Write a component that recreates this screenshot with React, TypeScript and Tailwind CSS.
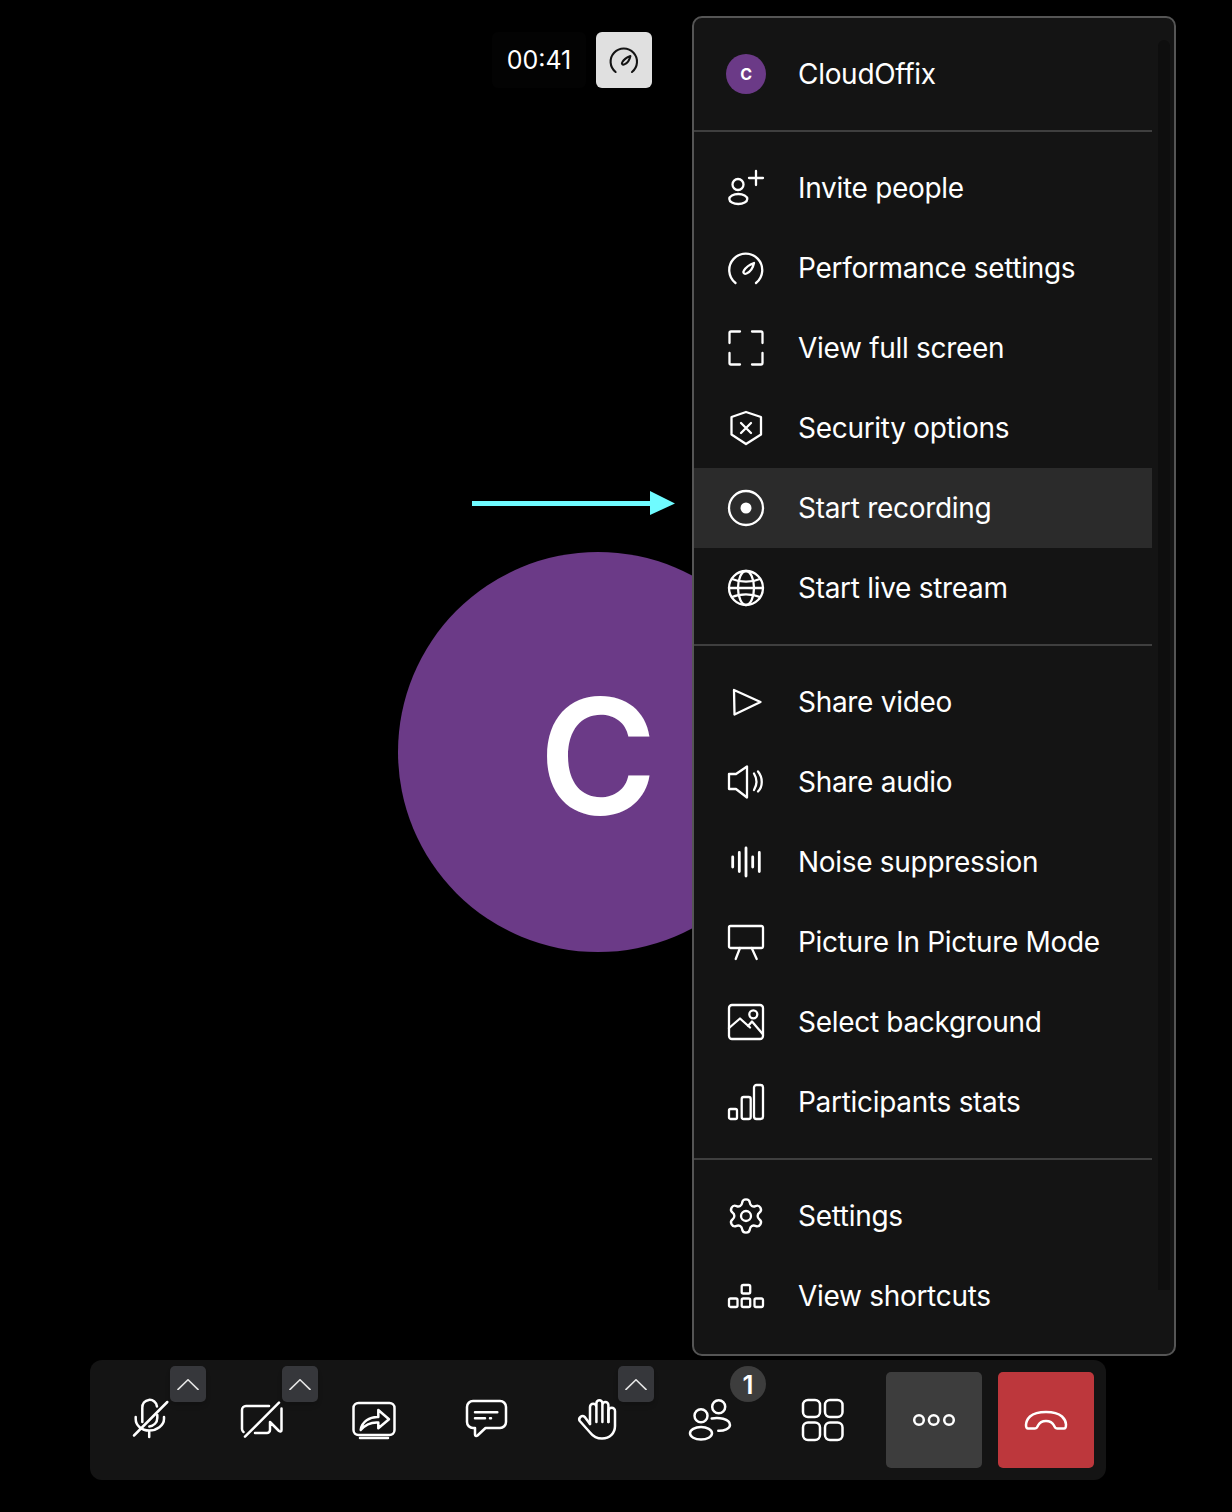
import type { ReactNode } from 'react';
import { Settings } from 'lucide-react';

function Ico({ children, className = 'w-10 h-10', sw = 2.300 }: { children: ReactNode; className?: string; sw?: number }) {
  return (
    <svg
      viewBox="0 0 40 40"
      fill="none"
      stroke="currentColor"
      strokeWidth={sw}
      strokeLinecap="round"
      strokeLinejoin="round"
      className={`${className} overflow-visible shrink-0`}
    >
      {children}
    </svg>
  );
}

const gauge = (
  <>
    <path d="M9.500 35A16.500 16.500 0 1 1 30 35" />
    <path d="M28 15c-1 5-4 9-7.500 10.500-2.500 1-4-1-2.500-3C20 19 24 16.500 28 15Z" />
  </>
);

const icons = {
  invite: (
    <>
      <circle cx="12" cy="16.500" r="5.500" />
      <ellipse cx="12.300" cy="31" rx="9" ry="5" />
      <path d="M30 3v14M23 10h14" />
    </>
  ),
  gauge,
  full: (
    <path d="M3.500 15V5a1.500 1.500 0 0 1 1.500-1.500h9M26 3.500h9a1.500 1.500 0 0 1 1.500 1.500v10M3.500 25v10a1.500 1.500 0 0 0 1.500 1.500h9M26 36.500h9a1.500 1.500 0 0 0 1.500-1.500V25" />
  ),
  shield: (
    <>
      <path d="M20 4l15 5v17.500L20 36 5.500 26.500V9Z" />
      <path d="M15 15l10 10M25 15L15 25" />
    </>
  ),
  record: (
    <>
      <circle cx="20" cy="20" r="17" />
      <circle cx="20" cy="20" r="5.500" fill="currentColor" stroke="none" />
    </>
  ),
  globe: (
    <>
      <circle cx="20" cy="20" r="17" />
      <ellipse cx="20" cy="20" rx="8" ry="17" />
      <path d="M3 20h34M6 11c8 3.500 20 3.500 28 0M6 29c8-3.500 20-3.500 28 0" />
    </>
  ),
  play: <path d="M8 8l26.500 12L8.500 32.500Z" />,
  audio: (
    <>
      <path d="M3 12h7l11-7.500V35.500L10 27H3Z" />
      <path d="M28 11.500c3 5 3 11.500 0 16.500M32 9.500c5 6 5 15 0 20" />
    </>
  ),
  noise: <path d="M6.700 15v10M13.300 10.500v19M20 6v28M26.700 15v10M33.300 10.500v19" />,
  pip: (
    <>
      <rect x="3" y="4" width="34" height="22" rx="1.500" />
      <path d="M14 26l-4.300 11M25.700 26l5 11" />
    </>
  ),
  background: (
    <>
      <rect x="3" y="3" width="34" height="34" rx="3" />
      <circle cx="27.300" cy="12.300" r="4" />
      <path d="M3 26l11-9.500 10 9M22 24l4-4.500L36.700 32" />
    </>
  ),
  stats: (
    <>
      <rect x="3" y="27" width="8" height="10" rx="1.500" />
      <rect x="15.700" y="15" width="9" height="22" rx="2" />
      <rect x="28" y="3" width="9" height="34" rx="2.500" />
    </>
  ),
  shortcuts: (
    <>
      <rect x="15.700" y="9" width="8.500" height="8.500" rx="1.500" />
      <rect x="3" y="22.500" width="8.500" height="8.500" rx="1.500" />
      <rect x="15.700" y="22.500" width="8.500" height="8.500" rx="1.500" />
      <rect x="28.500" y="22.500" width="8.500" height="8.500" rx="1.500" />
    </>
  ),
};

const sections: { icon: ReactNode; label: string; active?: boolean }[][] = [
  [
    { icon: <Ico>{icons.invite}</Ico>, label: 'Invite people' },
    { icon: <Ico>{icons.gauge}</Ico>, label: 'Performance settings' },
    { icon: <Ico>{icons.full}</Ico>, label: 'View full screen' },
    { icon: <Ico>{icons.shield}</Ico>, label: 'Security options' },
    { icon: <Ico>{icons.record}</Ico>, label: 'Start recording', active: true },
    { icon: <Ico>{icons.globe}</Ico>, label: 'Start live stream' },
  ],
  [
    { icon: <Ico>{icons.play}</Ico>, label: 'Share video' },
    { icon: <Ico>{icons.audio}</Ico>, label: 'Share audio' },
    { icon: <Ico sw={2.800}>{icons.noise}</Ico>, label: 'Noise suppression' },
    { icon: <Ico>{icons.pip}</Ico>, label: 'Picture In Picture Mode' },
    { icon: <Ico>{icons.background}</Ico>, label: 'Select background' },
    { icon: <Ico>{icons.stats}</Ico>, label: 'Participants stats' },
  ],
  [
    { icon: <Settings className="w-10 h-10 shrink-0" strokeWidth={1.400} />, label: 'Settings' },
    { icon: <Ico>{icons.shortcuts}</Ico>, label: 'View shortcuts' },
  ],
];

function Chevron() {
  return (
    <div className="absolute left-[68px] top-[-6px] w-9 h-9 rounded-[5px] bg-[#36373b] flex items-center justify-center text-[#e4e4e4] shadow-md">
      <svg viewBox="0 0 22 11" fill="none" stroke="currentColor" strokeWidth="1.600" className="w-[22px] h-[11px]">
        <path d="M.5 11L11 .8 21.500 11" />
      </svg>
    </div>
  );
}

function ToolButton({ children, badge, className = '' }: { children: ReactNode; badge?: ReactNode; className?: string }) {
  return (
    <div className={`relative w-24 h-24 rounded-[5px] flex items-center justify-center text-white ${className}`}>
      {children}
      {badge}
    </div>
  );
}

function Toolbar() {
  return (
    <div className="ml-[90px] w-[1016px] h-[120px] rounded-xl bg-[#141414] p-3 flex gap-4">
      <ToolButton badge={<Chevron />}>
        <Ico sw={2.500}>
          <path d="M12.300 22V8a7.300 7.300 0 0 1 14.700-1.500M27.300 15v3c0 4.500-3.500 8-8 8.500" />
          <path d="M5.700 17v2c0 6.500 6 11.500 13.500 11.500S34 25.500 34 19v-2M19.200 30.500V37M4 35.500L37.300 2" />
        </Ico>
      </ToolButton>
      <ToolButton badge={<Chevron />}>
        <Ico sw={2.500}>
          <path d="M27 6H4a4 4 0 0 0-4 4v19a4 4 0 0 0 1.500 3M13 33h12a3 3 0 0 0 3-3v-8l9 9c1.500 1 2.500 .5 2.500-1V8.500M3 36.700L37 2.700" />
        </Ico>
      </ToolButton>
      <ToolButton>
        <Ico sw={2.500}>
          <rect x="-.500" y="3" width="41" height="32" rx="5" />
          <path d="M6 38h28" strokeWidth="2.500" />
          <path d="M6.700 30c1-8 9-13.500 17.600-13V10L35 19.300 24.300 28.300V22.500C17 22 11 25 6.700 30Z" />
        </Ico>
      </ToolButton>
      <ToolButton>
        <Ico sw={2.500}>
          <path d="M7 1h27a6 6 0 0 1 6 6v15a6 6 0 0 1-6 6H19.500l-8 7.500c-1.200 1-2.500 .5-2.500-1V28H7a6 6 0 0 1-6-6V7a6 6 0 0 1 6-6Z" />
          <path d="M9 12.300h22.300M9 18.300h10M24 18.300h1" />
        </Ico>
      </ToolButton>
      <ToolButton badge={<Chevron />}>
        <Ico sw={2.500}>
          <path d="M12 24V7a3.200 3.200 0 0 1 6.400 0V22M18.400 22V3.300a3 3 0 0 1 6 0V22M24.400 22V5a3 3 0 0 1 6 0V22" />
          <path d="M30.400 22V11a3.300 3.300 0 0 1 6.600 0V26c0 7-5 12.500-13 12.500-5 0-8.500-1.500-11.500-5.500L1.800 21c-2-3 2-6.500 5-4L12 24" />
        </Ico>
      </ToolButton>
      <ToolButton
        badge={
          <div className="absolute left-[68px] top-[-6px] w-9 h-9 rounded-full bg-[#3d3d3d] flex items-center justify-center text-[26px] font-semibold font-['Inter',sans-serif]">
            1
          </div>
        }
      >
        <Ico sw={2.500}>
          <circle cx="11" cy="15.700" r="6.500" />
          <ellipse cx="11" cy="33.300" rx="11" ry="6.300" />
          <circle cx="28.700" cy="6.700" r="6.500" />
          <path d="M21.700 18.500C28 17 40 18.500 40 25c0 3.500-6 6-11.700 5.700" />
        </Ico>
      </ToolButton>
      <ToolButton>
        <Ico sw={2.500}>
          <rect x="1" y="0" width="17" height="17" rx="5" />
          <rect x="23" y="0" width="17.500" height="17" rx="5" />
          <rect x="1" y="22.500" width="17" height="17.500" rx="5" />
          <rect x="23" y="22.500" width="17.500" height="17.500" rx="5" />
        </Ico>
      </ToolButton>
      <ToolButton className="bg-[#3d3d3d]">
        <Ico sw={2.500}>
          <circle cx="5" cy="20" r="4.800" />
          <circle cx="19.700" cy="20" r="4.800" />
          <circle cx="35" cy="20" r="4.800" />
        </Ico>
      </ToolButton>
      <ToolButton className="bg-[#bd373c]">
        <Ico sw={2.500}>
          <path d="M2 28.500H9c2 0 2-1 3-3 1.500-3 4-4.500 8-4.500s6.500 1.500 8 4.500c1 2 1 3 3 3h7c2 0 2-2 2-4 0-3-1-5-4-8C32 13 27 12 20 12S8 13 4 16.500C1 19.500 0 22 0 25c0 2 0 3.500 2 3.500Z" />
        </Ico>
      </ToolButton>
    </div>
  );
}

function Menu() {
  return (
    <div className="absolute left-[692px] top-4 w-[484px] h-[1340px] border-2 border-[#555555] rounded-[10px] bg-[#141414] text-white text-[28px] tracking-[-0.3px] font-['Inter',sans-serif]">
      <div className="absolute right-1 top-[22px] w-3 h-[1250px] rounded-t-md bg-[#0e0e0e]" />
      <div className="w-[458px]">
        <div className="h-[112px] pl-8 flex items-center gap-8">
          <div className="w-10 h-10 rounded-full bg-[#6b3a87] flex items-center justify-center text-base font-bold">C</div>
          <span>CloudOffix</span>
        </div>
        {sections.map((items, i) => (
          <div key={i} className="border-t-2 border-[#3f3f3f] py-4">
            {items.map((item) => (
              <div key={item.label} className={`h-20 pl-8 flex items-center gap-8 ${item.active ? 'bg-[#2b2b2b]' : ''}`}>
                {item.icon}
                <span>{item.label}</span>
              </div>
            ))}
          </div>
        ))}
      </div>
    </div>
  );
}

export default function App() {
  return (
    <div className="relative w-[1232px] h-[1512px] bg-black overflow-hidden">
      <div className="h-[1360px]">
        <div className="pt-8 pl-[492px] flex gap-2.5">
          <div className="w-[94px] h-14 pt-0.5 rounded-md bg-[#030303] flex items-center justify-center text-white text-[25px] font-['Inter',sans-serif]">
            00:41
          </div>
          <div className="w-14 h-14 rounded-md bg-[#e0e0e0] flex items-center justify-center text-[#141414]">
            <Ico className="w-8 h-8" sw={2.600}>{icons.gauge}</Ico>
          </div>
        </div>
        <div className="mt-[464px] ml-[398px] w-[400px] h-[400px] rounded-full bg-[#6b3a87] flex items-center justify-center text-white text-[160px] font-semibold pt-2 font-['Inter',sans-serif]">
          C
        </div>
      </div>
      <Toolbar />
      <Menu />
      {/* annotation arrow */}
      <svg viewBox="0 0 203 24" className="absolute left-[472px] top-[491px] w-[203px] h-6">
        <path d="M0 10h178V0l25 12.500L178 24V15H0Z" fill="#6ffbff" />
      </svg>
    </div>
  );
}
